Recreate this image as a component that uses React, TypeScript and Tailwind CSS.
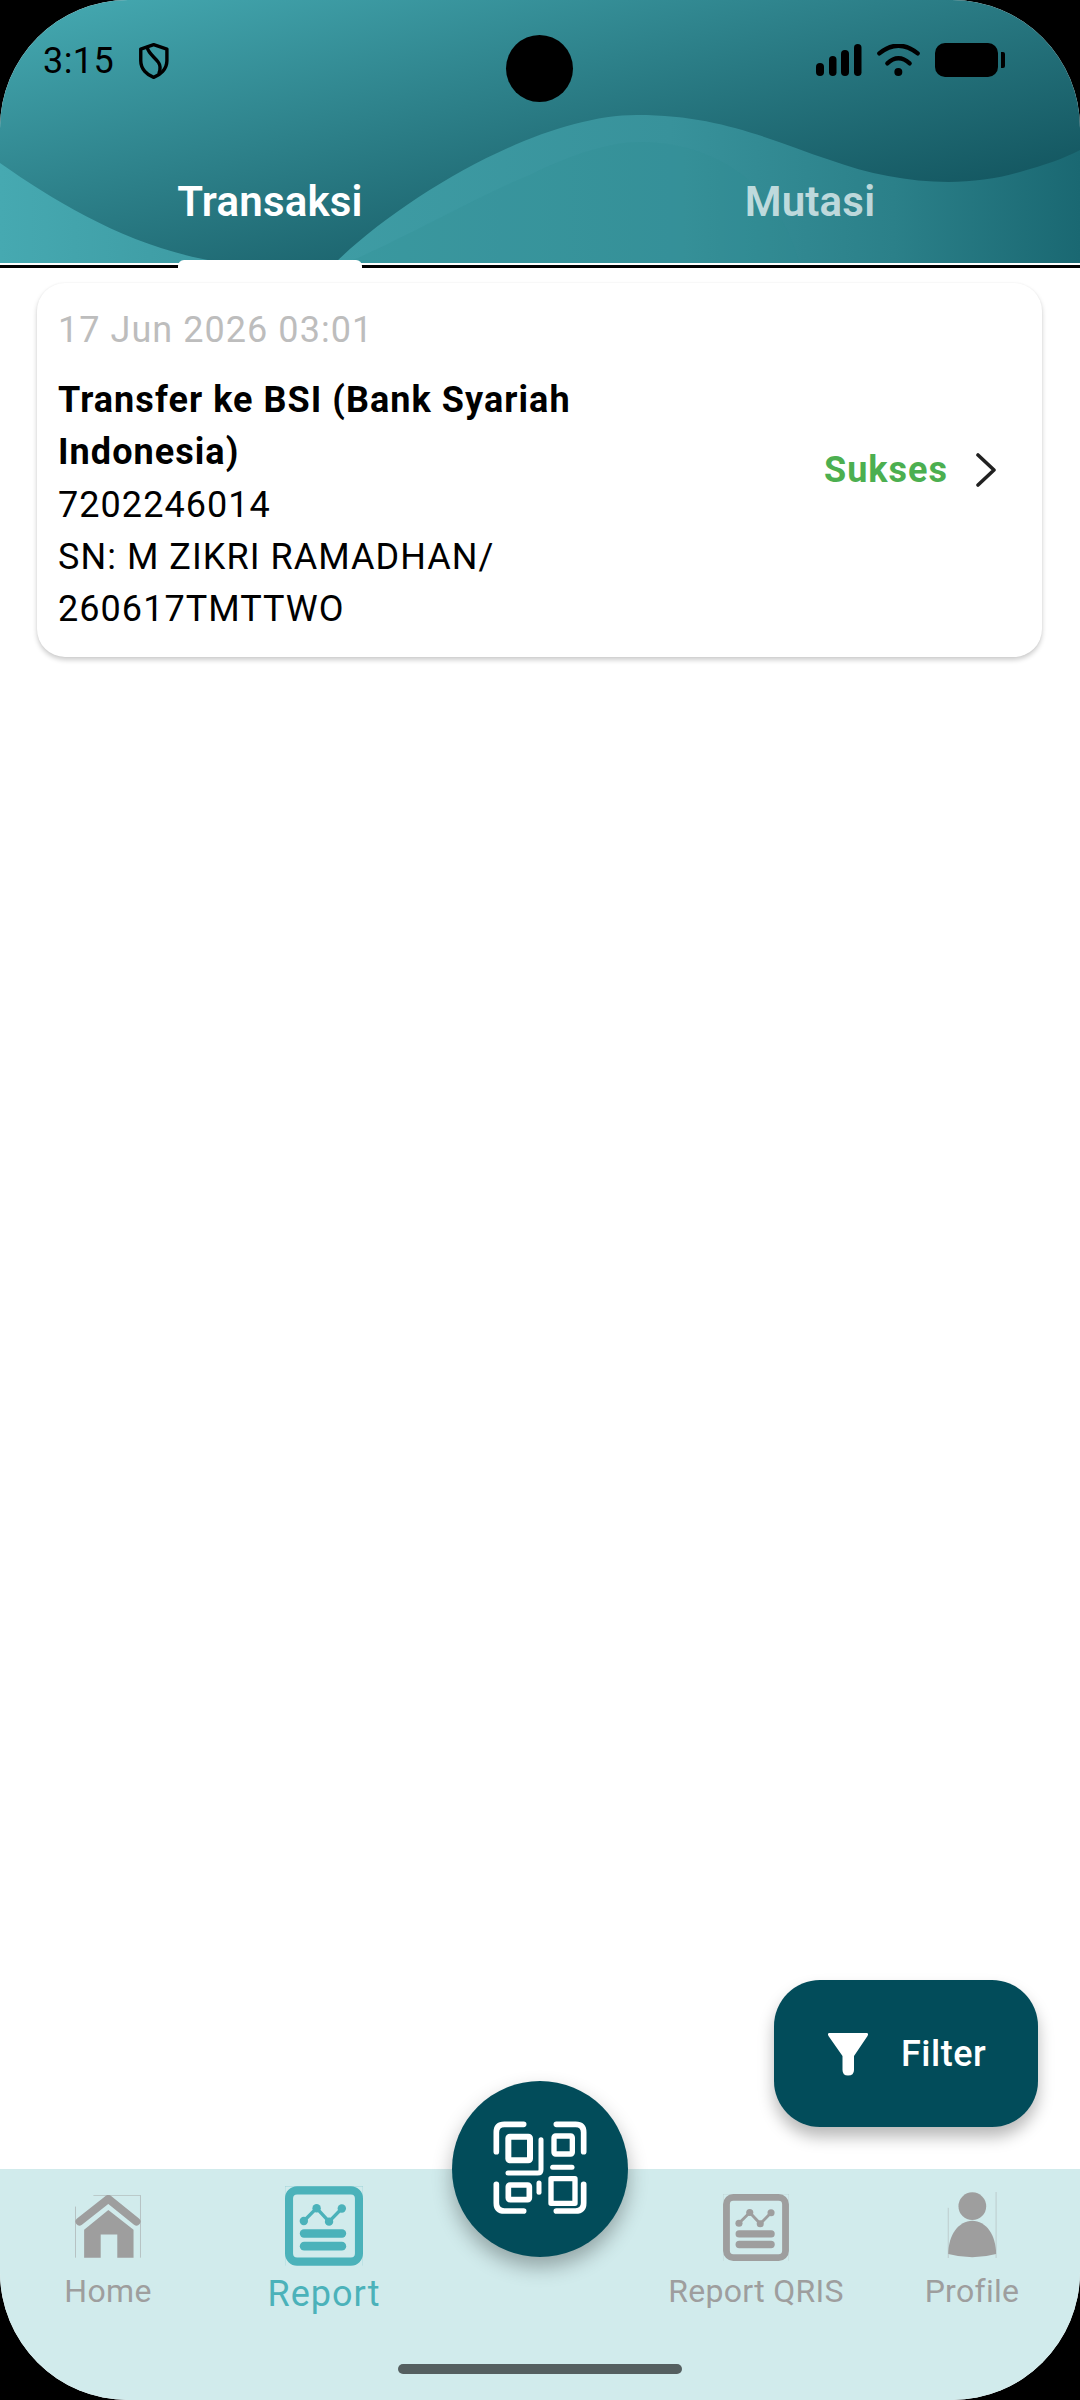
import React from "react";

function Shield() {
  return (
    <svg width="30" height="36" viewBox="423 128 88 106" fill="none" stroke="#000" strokeWidth="10" strokeLinejoin="round" strokeLinecap="round">
      <path d="M466 133 L505 146 V180 C505 205 485 222 466 229 C447 222 428 205 428 180 V146 Z" />
      <path d="M447 141 C451 160 470 170 480 185 C487 195 486 205 482 216" />
    </svg>
  );
}

function Signal() {
  return (
    <svg width="46" height="32" viewBox="0 0 46 32">
      <rect x="0" y="19" width="8" height="13" rx="4" />
      <rect x="13" y="12" width="7.5" height="20" rx="3.75" />
      <rect x="25" y="6" width="8" height="26" rx="4" />
      <rect x="38" y="0" width="7.5" height="32" rx="3.75" />
    </svg>
  );
}

function Wifi() {
  return (
    <svg width="43" height="32" viewBox="288 132 129 96" fill="none" stroke="#000" strokeWidth="13" strokeLinecap="round">
      <path d="M295 160 Q352 114 410 160" />
      <path d="M319 190 Q352 160 386 190" />
      <circle cx="352" cy="216" r="12" fill="#000" stroke="none" />
    </svg>
  );
}

function Battery() {
  return (
    <div className="flex items-center gap-[3px]">
      <div className="w-[63px] h-[34px] rounded-[10px] bg-black" />
      <div className="w-[4px] h-[16px] rounded-r-[2px] bg-black" />
    </div>
  );
}

function HeaderWaves() {
  return (
    <svg className="absolute inset-0" width="1080" height="263" viewBox="0 0 1080 263" preserveAspectRatio="none">
      <defs>
        <linearGradient id="lw" x1="0" y1="0" x2="1" y2="0">
          <stop offset="0" stopColor="#3e9ca4" />
          <stop offset="0.45" stopColor="#38929b" />
          <stop offset="0.75" stopColor="#2b8089" />
          <stop offset="1" stopColor="#1a6872" />
        </linearGradient>
        <linearGradient id="ll" x1="0" y1="0" x2="1" y2="0">
          <stop offset="0" stopColor="#46a9b1" />
          <stop offset="1" stopColor="#3d9aa2" />
        </linearGradient>
      </defs>
      <path d="M0 163 C60 205 135 250 225 263 H0 Z" fill="url(#ll)" />
      <path
        d="M335 263 C405 195 540 115 637 115 C720 115 770 140 830 160 C890 182 960 190 1020 172 C1045 165 1065 158 1080 150 V263 Z"
        fill="url(#lw)"
      />
      <path d="M358 258 C430 225 480 195 530 175 C570 155 610 142 640 142 C720 142 780 190 799 263 H345 Z" fill="#2f8a93" fillOpacity="0.2" />
    </svg>
  );
}

function StatChart({ color }: { color: string }) {
  return (
    <svg className="w-full h-full" viewBox="736 52 232 236" fill="none">
      <rect x="748" y="64" width="208" height="212" rx="24" stroke={color} strokeWidth="24" />
      <path d="M792 155 L830 117 L867 157 L905 118" stroke={color} strokeWidth="10" strokeLinejoin="round" />
      <circle cx="792" cy="155" r="12.5" fill={color} />
      <circle cx="830" cy="117" r="12.5" fill={color} />
      <circle cx="867" cy="157" r="12.5" fill={color} />
      <circle cx="905" cy="118" r="12.5" fill={color} />
      <rect x="780" y="180" width="138" height="25" rx="12.5" fill={color} />
      <rect x="780" y="217" width="138" height="26" rx="13" fill={color} />
      <path d="M736 52 H968 V288 M736 52 V288" stroke={color} strokeOpacity="0.5" strokeWidth="1.5" />
    </svg>
  );
}

function HomeIcon() {
  return (
    <svg width="66" height="63" viewBox="105 75 198 190" fill="none">
      <path d="M118 155 L205 87 L290 155" stroke="#9e9e9e" strokeWidth="24" strokeLinecap="round" strokeLinejoin="round" />
      <path d="M132 180 L205 120 L281 180 V264 H232 V194 H182 V264 H132 Z" fill="#9e9e9e" />
      <path d="M160 76 H302 V264 M106 110 V264" stroke="#9e9e9e" strokeWidth="2" strokeOpacity="0.8" />
    </svg>
  );
}

function ProfileIcon() {
  return (
    <svg width="50" height="66" viewBox="800 70 150 200" fill="none">
      <circle cx="876" cy="113" r="42" fill="#9e9e9e" />
      <path d="M803 258 C803 200 835 157 876 157 C917 157 948 200 948 258 Q876 278 803 258 Z" fill="#9e9e9e" />
      <path d="M803 118 V270 M948 70 V270" stroke="#9e9e9e" strokeWidth="2" strokeOpacity="0.6" />
    </svg>
  );
}

function QrIcon() {
  return (
    <svg width="100" height="100" viewBox="150 150 300 300" fill="none" stroke="#fff" strokeLinecap="round" strokeLinejoin="round">
      <g strokeWidth="17">
        <path d="M169 248 V190 Q169 166 193 166 H251" />
        <path d="M349 166 H407 Q431 166 431 190 V248" />
        <path d="M169 346 V402 Q169 426 193 426 H251" />
        <path d="M349 426 H407 Q431 426 431 402 V346" />
      </g>
      <rect x="205" y="203" width="65" height="71" rx="5" strokeWidth="18" />
      <rect x="342" y="201" width="55" height="54" rx="5" strokeWidth="16" />
      <rect x="205" y="348" width="63" height="44" rx="5" strokeWidth="17" />
      <path d="M333 329 H405 V403 H333 Z" strokeWidth="16" />
      <path d="M303 212 V302 Q303 312 293 312 H204" strokeWidth="15" />
      <path d="M297 342 V370" strokeWidth="15" />
      <path d="M338 295 H396" strokeWidth="15" />
    </svg>
  );
}

function FunnelIcon() {
  return (
    <svg width="42" height="44" viewBox="0 0 42 44" fill="#fff">
      <path d="M2.5 1 H39.5 Q42 1 40.5 4 L27 24 V38 Q27 43.5 21 43.5 Q15.5 43.5 15.5 38 V24 L1.5 4 Q0 1 2.5 1 Z" />
    </svg>
  );
}

function NavItem({ icon, label, active }: { icon: React.ReactNode; label: string; active?: boolean }) {
  return (
    <div className="flex flex-col items-center">
      <div className={active ? "h-[97px] flex items-end" : "h-[89px] flex items-end"}>{icon}</div>
      <span
        className={
          active
            ? "text-[36px] leading-[42px] text-[#4bb2ba] tracking-[1px] mt-[7px] whitespace-nowrap"
            : "text-[32px] leading-[38px] text-[#9e9e9e] tracking-[0.3px] mt-[14px] whitespace-nowrap"
        }
      >
        {label}
      </span>
    </div>
  );
}

export default function App() {
  return (
    <div className="w-[1080px] h-[2400px] bg-black font-['Roboto',sans-serif]">
      <div className="relative w-full h-full bg-white rounded-[128px] overflow-hidden flex flex-col">
        <header className="relative h-[263px] bg-linear-to-br from-[#46abb3] to-[#084650] overflow-hidden shrink-0">
          <HeaderWaves />
          <div className="relative flex items-start justify-between h-[178px] pt-[43px] pl-[43px] pr-[75px]">
            <div className="flex items-center gap-[25px] text-black">
              <span className="text-[36px] leading-[36px] tracking-[0.4px]">3:15</span>
              <Shield />
            </div>
            <div className="flex items-center gap-[15px]">
              <Signal />
              <Wifi />
              <Battery />
            </div>
          </div>
          <div className="relative grid grid-cols-2 text-center">
            <span className="text-[42px] leading-[48px] font-semibold text-white tracking-[0.2px]">Transaksi</span>
            <span className="text-[42px] leading-[48px] font-semibold text-white/70 tracking-[0.2px]">Mutasi</span>
          </div>
        </header>
        <div className="relative shrink-0 h-[3px] mt-[2px] bg-black">
          <div className="absolute left-[178px] top-[-5px] w-[184px] h-[8px] rounded-t-[6px] bg-white" />
        </div>

        <main className="flex-1 pl-[37px] pr-[38px] pt-[15px]">
          <div className="flex items-center justify-between rounded-[28px] bg-white pl-[21px] pr-[45px] h-[374px] shadow-[0_3px_5px_rgba(0,0,0,0.2),0_0_2px_rgba(0,0,0,0.05)]">
            <div className="text-[36px] leading-[52.4px] text-black tracking-[1.05px]">
              <div className="text-[#bdbdbd] mb-[17px]">17 Jun 2026 03:01</div>
              <div className="font-bold">Transfer ke BSI (Bank Syariah</div>
              <div className="font-bold">Indonesia)</div>
              <div>7202246014</div>
              <div>SN: M ZIKRI RAMADHAN/</div>
              <div>260617TMTTWO</div>
            </div>
            <div className="flex items-center gap-[27px]">
              <span className="text-[36px] leading-[42px] font-bold text-[#4caf50] tracking-[1px]">Sukses</span>
              <svg width="22" height="34" viewBox="0 0 22 34" fill="none" stroke="#212121" strokeWidth="3.6" strokeLinecap="round" strokeLinejoin="round">
                <path d="M3 2 L19 17 L3 32" />
              </svg>
            </div>
          </div>
        </main>

        <nav className="relative shrink-0 h-[231px] bg-[#d1ebec] grid grid-cols-5">
          <NavItem icon={<HomeIcon />} label="Home" />
          <NavItem
            active
            icon={
              <div className="w-[78px] h-[80px]">
                <StatChart color="#4bb2ba" />
              </div>
            }
            label="Report"
          />
          <div />
          <NavItem
            icon={
              <div className="w-[66px] h-[67px] mb-[-3px]">
                <StatChart color="#9e9e9e" />
              </div>
            }
            label="Report QRIS"
          />
          <NavItem icon={<ProfileIcon />} label="Profile" />
          <div className="absolute left-[398px] top-[195px] w-[284px] h-[10px] rounded-full bg-[#555f60]" />
        </nav>

        <button className="absolute left-[774px] top-[1980px] w-[264px] h-[147px] rounded-[46px] bg-[#024c5a] flex items-center pl-[53px] gap-[32px] shadow-[0_10px_16px_rgba(0,0,0,0.28)]">
          <FunnelIcon />
          <span className="text-[36px] font-medium text-white tracking-[0.5px]">Filter</span>
        </button>

        <button className="absolute left-[452px] top-[2081px] w-[176px] h-[176px] rounded-full bg-[#024c5a] flex items-center justify-center shadow-[0_10px_20px_rgba(0,0,0,0.3)]">
          <QrIcon />
        </button>

        <div className="absolute left-[506px] top-[35px] w-[67px] h-[67px] rounded-full bg-black" />
      </div>
    </div>
  );
}
